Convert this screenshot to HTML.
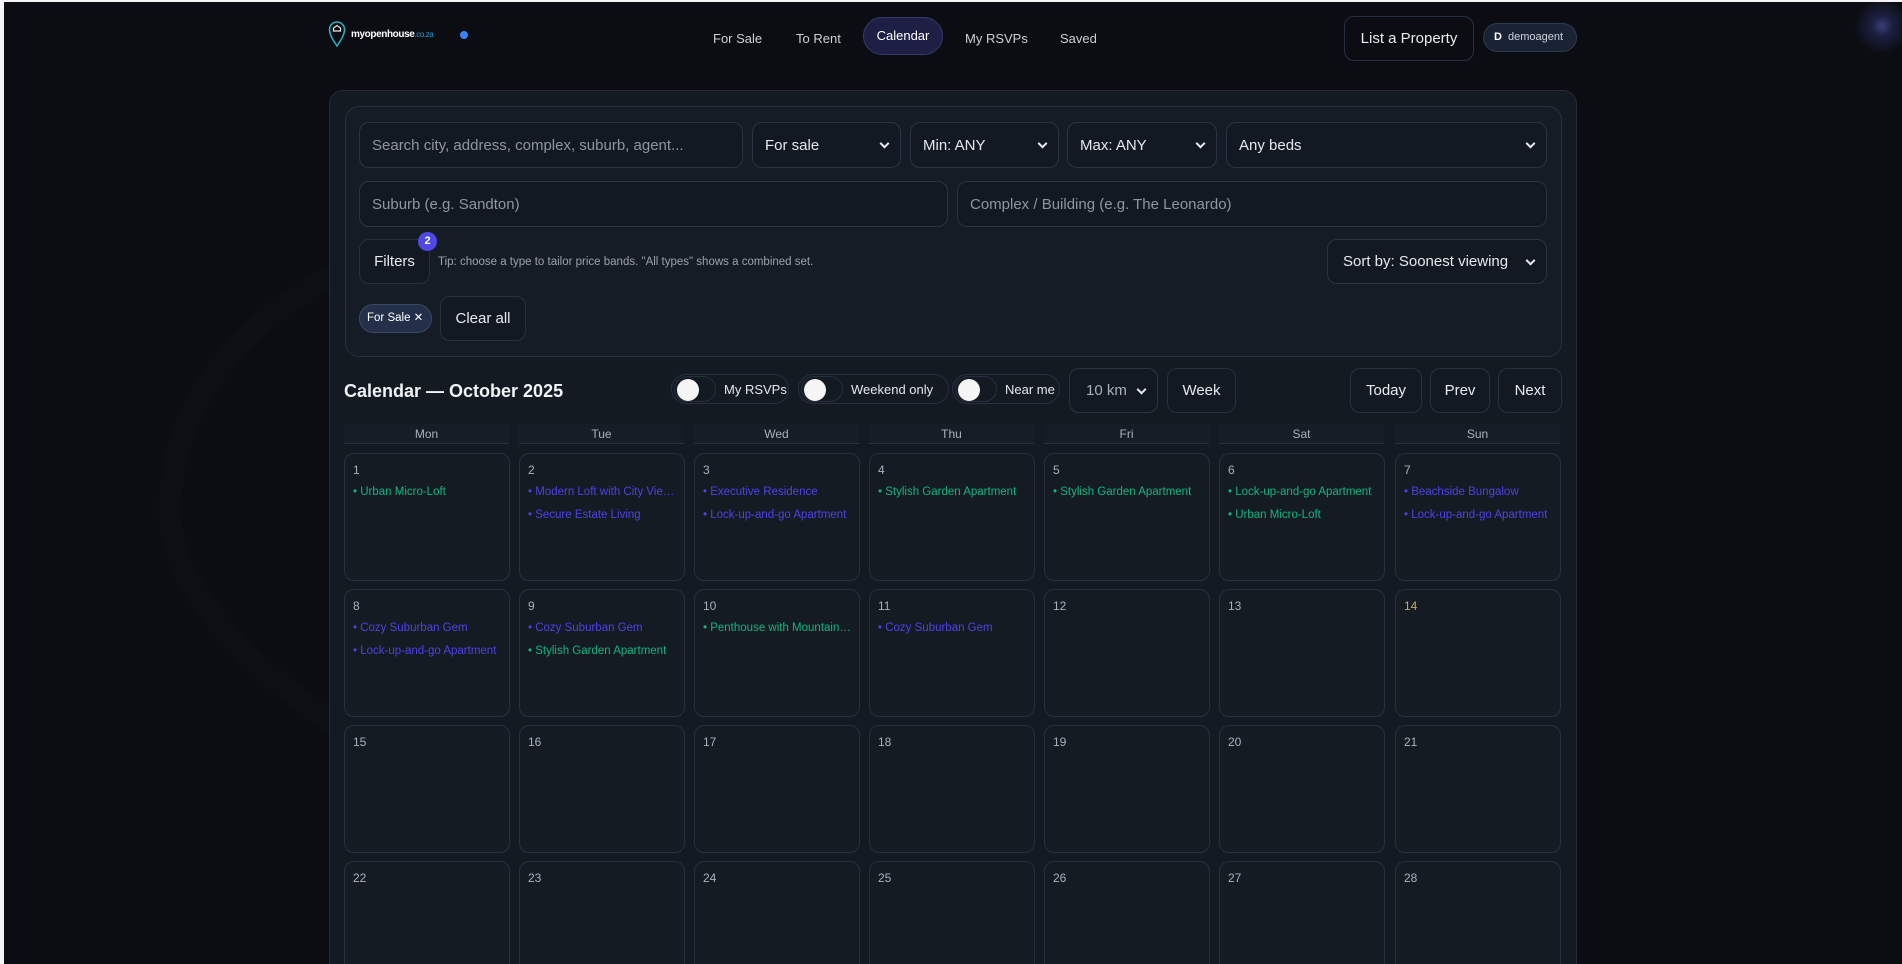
<!DOCTYPE html>
<html><head><meta charset="utf-8"><style>
*{box-sizing:border-box;margin:0;padding:0}
html,body{width:1902px;height:964px;overflow:hidden;background:#f4f4f4;font-family:"Liberation Sans",sans-serif;color:#e5e7eb}
.frame{position:absolute;left:0;top:2px;width:1902px;height:962px;background:#0b0d12;overflow:hidden}
.wl{position:absolute;left:0;top:0;width:4px;height:964px;background:#f4f4f4}
.abs{position:absolute}
.nav{font-size:13px;color:#cbd0d8;top:29px}
.btn{position:absolute;border:1px solid #263040;border-radius:10px;display:flex;align-items:center;justify-content:center;color:#e8eaee;font-size:15px;background:#131922;white-space:nowrap}
.panel{position:absolute;left:329px;top:88px;width:1248px;height:900px;background:#141a22;border:1px solid #222b37;border-radius:14px}
.inp{position:absolute;border:1px solid #2a3442;border-radius:10px;background:#131922;font-size:15px;color:#8e96a3;display:flex;align-items:center;padding-left:12px;white-space:nowrap}
.sel{color:#e6e8ec}
.sel::after{content:"";position:absolute;right:12px;top:50%;width:5px;height:5px;border-right:2px solid #e6e8ec;border-bottom:2px solid #e6e8ec;transform:translateY(-70%) rotate(45deg)}
.tog{position:absolute;border:1px solid #253040;border-radius:16px;height:30px;top:372px;font-size:13px;color:#e6e8ec;display:flex;align-items:center;white-space:nowrap}
.tog .sw{width:42px;height:26px;border-radius:13px;border:1px solid #253040;margin-left:2px;margin-right:8px;position:relative;flex:none}
.tog .sw::before{content:"";position:absolute;left:2px;top:2px;width:22px;height:22px;border-radius:50%;background:#f5f5f5}
.dh{position:absolute;top:422px;height:20px;width:165px;background:#161d27;border-bottom:1px solid #263040;font-size:12px;color:#aab1bc;text-align:center;line-height:20px}
.cell{position:absolute;width:166px;height:128px;border:1px solid #263040;border-radius:10px;background:#151b23;padding:9px 8px;font-size:11.5px}
.cell .n{color:#aab1bc;font-size:12px;margin-bottom:8px}
.ev{white-space:nowrap;overflow:hidden;text-overflow:ellipsis;margin-bottom:9px;line-height:14px}
.g{color:#13b57f}.b{color:#4b43e6}
</style></head><body><div class="frame">
<svg class="abs" style="left:150px;top:160px;opacity:.35" width="1500" height="700"><g fill="none" stroke="#10161c" stroke-width="22"><path d="M420 60 C200 60 20 180 20 350 C20 480 250 620 420 690 C590 620 820 480 820 350 C820 180 640 60 420 60Z"/><path d="M230 380 V300 L420 180 L610 300 V380"/></g></svg>
<div class="abs" style="left:1824px;top:0;width:80px;height:60px;background:radial-gradient(circle at 58px 24px,#3a3f7a 0,#1c2040 10px,transparent 28px)"></div>
<svg class="abs" style="left:328px;top:18px" width="18" height="28" viewBox="0 0 18 28"><path d="M9 26 C5 20 1.5 15 1.5 9.5 A7.5 7.5 0 0 1 16.5 9.5 C16.5 15 13 20 9 26Z" fill="none" stroke="#2bb3c0" stroke-width="1.5"/><path d="M5.5 11 V8 L9 5.5 L12.5 8 V11Z" fill="none" stroke="#e8eaee" stroke-width="1.2"/></svg>
<div class="abs" style="left:351px;top:27px;font-size:10px;font-weight:bold;color:#fff;letter-spacing:-.4px">myopenhouse<span style="color:#2a9fd6;font-size:8px;font-weight:normal">.co.za</span></div>
<div class="abs" style="left:460px;top:29px;width:8px;height:8px;border-radius:50%;background:#3b82f6"></div>
<div class="abs nav" style="left:713px">For Sale</div>
<div class="abs nav" style="left:796px">To Rent</div>
<div class="abs" style="left:863px;top:15px;width:80px;height:38px;border-radius:19px;background:#1e1f44;border:1px solid #343a70;color:#fff;font-size:13px;text-align:center;line-height:36px">Calendar</div>
<div class="abs nav" style="left:965px">My RSVPs</div>
<div class="abs nav" style="left:1060px">Saved</div>
<div class="btn" style="left:1344px;top:14px;width:130px;height:45px;background:#0b0d12">List a Property</div>
<div class="abs" style="left:1483px;top:21px;width:94px;height:29px;border-radius:15px;background:#1a2333;border:1px solid #2c3a4e;font-size:11px;color:#cfd4dc;line-height:27px;padding-left:10px;white-space:nowrap"><b style="color:#fff;margin-right:6px">D</b>demoagent</div>
<div class="panel"></div>
<div class="abs" style="left:345px;top:104px;width:1217px;height:251px;border:1px solid #263040;border-radius:14px;background:#161c25"></div>
<div class="inp" style="left:359px;top:120px;width:384px;height:46px">Search city, address, complex, suburb, agent...</div>
<div class="inp sel" style="left:752px;top:120px;width:149px;height:46px">For sale</div>
<div class="inp sel" style="left:910px;top:120px;width:149px;height:46px">Min: ANY</div>
<div class="inp sel" style="left:1067px;top:120px;width:150px;height:46px">Max: ANY</div>
<div class="inp sel" style="left:1226px;top:120px;width:321px;height:46px">Any beds</div>
<div class="inp" style="left:359px;top:179px;width:589px;height:46px">Suburb (e.g. Sandton)</div>
<div class="inp" style="left:957px;top:179px;width:590px;height:46px">Complex / Building (e.g. The Leonardo)</div>
<div class="btn" style="left:359px;top:237px;width:71px;height:45px">Filters</div>
<div class="abs" style="left:418px;top:230px;width:19px;height:19px;border-radius:50%;background:#5048e5;color:#fff;font-size:11px;font-weight:bold;text-align:center;line-height:19px">2</div>
<div class="abs" style="left:438px;top:254px;font-size:11.5px;color:#9aa2ae">Tip: choose a type to tailor price bands. "All types" shows a combined set.</div>
<div class="inp sel" style="left:1327px;top:237px;width:220px;height:45px;padding-left:15px">Sort by: Soonest viewing</div>
<div class="abs" style="left:359px;top:302px;width:73px;height:29px;border-radius:15px;background:#243049;border:1px solid #3a4a60;font-size:11.5px;color:#fff;line-height:27px;padding-left:7px;white-space:nowrap">For Sale ✕</div>
<div class="btn" style="left:440px;top:294px;width:86px;height:45px">Clear all</div>
<div class="abs" style="left:344px;top:379px;font-size:18px;font-weight:bold;color:#f1f3f5">Calendar — October 2025</div>
<div class="tog" style="left:671px;width:118px"><span class="sw"></span>My RSVPs</div>
<div class="tog" style="left:798px;width:151px"><span class="sw"></span>Weekend only</div>
<div class="tog" style="left:952px;width:108px"><span class="sw"></span>Near me</div>
<div class="inp sel" style="left:1069px;top:366px;width:89px;height:45px;color:#aab1bc;padding-left:16px">10 km</div>
<div class="btn" style="left:1167px;top:366px;width:69px;height:45px">Week</div>
<div class="btn" style="left:1350px;top:366px;width:72px;height:45px">Today</div>
<div class="btn" style="left:1430px;top:366px;width:60px;height:45px">Prev</div>
<div class="btn" style="left:1498px;top:366px;width:64px;height:45px">Next</div>
<div class="dh" style="left:344px">Mon</div><div class="dh" style="left:519px">Tue</div><div class="dh" style="left:694px">Wed</div><div class="dh" style="left:869px">Thu</div><div class="dh" style="left:1044px">Fri</div><div class="dh" style="left:1219px">Sat</div><div class="dh" style="left:1395px">Sun</div>
<div class="cell" style="left:344px;top:451px"><div class="n">1</div><div class="ev g">• Urban Micro-Loft</div></div>
<div class="cell" style="left:519px;top:451px"><div class="n">2</div><div class="ev b">• Modern Loft with City Views</div><div class="ev b">• Secure Estate Living</div></div>
<div class="cell" style="left:694px;top:451px"><div class="n">3</div><div class="ev b">• Executive Residence</div><div class="ev b">• Lock-up-and-go Apartment</div></div>
<div class="cell" style="left:869px;top:451px"><div class="n">4</div><div class="ev g">• Stylish Garden Apartment</div></div>
<div class="cell" style="left:1044px;top:451px"><div class="n">5</div><div class="ev g">• Stylish Garden Apartment</div></div>
<div class="cell" style="left:1219px;top:451px"><div class="n">6</div><div class="ev g">• Lock-up-and-go Apartment</div><div class="ev g">• Urban Micro-Loft</div></div>
<div class="cell" style="left:1395px;top:451px"><div class="n">7</div><div class="ev b">• Beachside Bungalow</div><div class="ev b">• Lock-up-and-go Apartment</div></div>
<div class="cell" style="left:344px;top:587px"><div class="n">8</div><div class="ev b">• Cozy Suburban Gem</div><div class="ev b">• Lock-up-and-go Apartment</div></div>
<div class="cell" style="left:519px;top:587px"><div class="n">9</div><div class="ev b">• Cozy Suburban Gem</div><div class="ev g">• Stylish Garden Apartment</div></div>
<div class="cell" style="left:694px;top:587px"><div class="n">10</div><div class="ev g">• Penthouse with Mountain Views</div></div>
<div class="cell" style="left:869px;top:587px"><div class="n">11</div><div class="ev b">• Cozy Suburban Gem</div></div>
<div class="cell" style="left:1044px;top:587px"><div class="n">12</div></div>
<div class="cell" style="left:1219px;top:587px"><div class="n">13</div></div>
<div class="cell" style="left:1395px;top:587px"><div class="n" style="color:#c9a66b">14</div></div>
<div class="cell" style="left:344px;top:723px"><div class="n">15</div></div>
<div class="cell" style="left:519px;top:723px"><div class="n">16</div></div>
<div class="cell" style="left:694px;top:723px"><div class="n">17</div></div>
<div class="cell" style="left:869px;top:723px"><div class="n">18</div></div>
<div class="cell" style="left:1044px;top:723px"><div class="n">19</div></div>
<div class="cell" style="left:1219px;top:723px"><div class="n">20</div></div>
<div class="cell" style="left:1395px;top:723px"><div class="n">21</div></div>
<div class="cell" style="left:344px;top:859px"><div class="n">22</div></div>
<div class="cell" style="left:519px;top:859px"><div class="n">23</div></div>
<div class="cell" style="left:694px;top:859px"><div class="n">24</div></div>
<div class="cell" style="left:869px;top:859px"><div class="n">25</div></div>
<div class="cell" style="left:1044px;top:859px"><div class="n">26</div></div>
<div class="cell" style="left:1219px;top:859px"><div class="n">27</div></div>
<div class="cell" style="left:1395px;top:859px"><div class="n">28</div></div>
</div><div class="wl"></div></body></html>
